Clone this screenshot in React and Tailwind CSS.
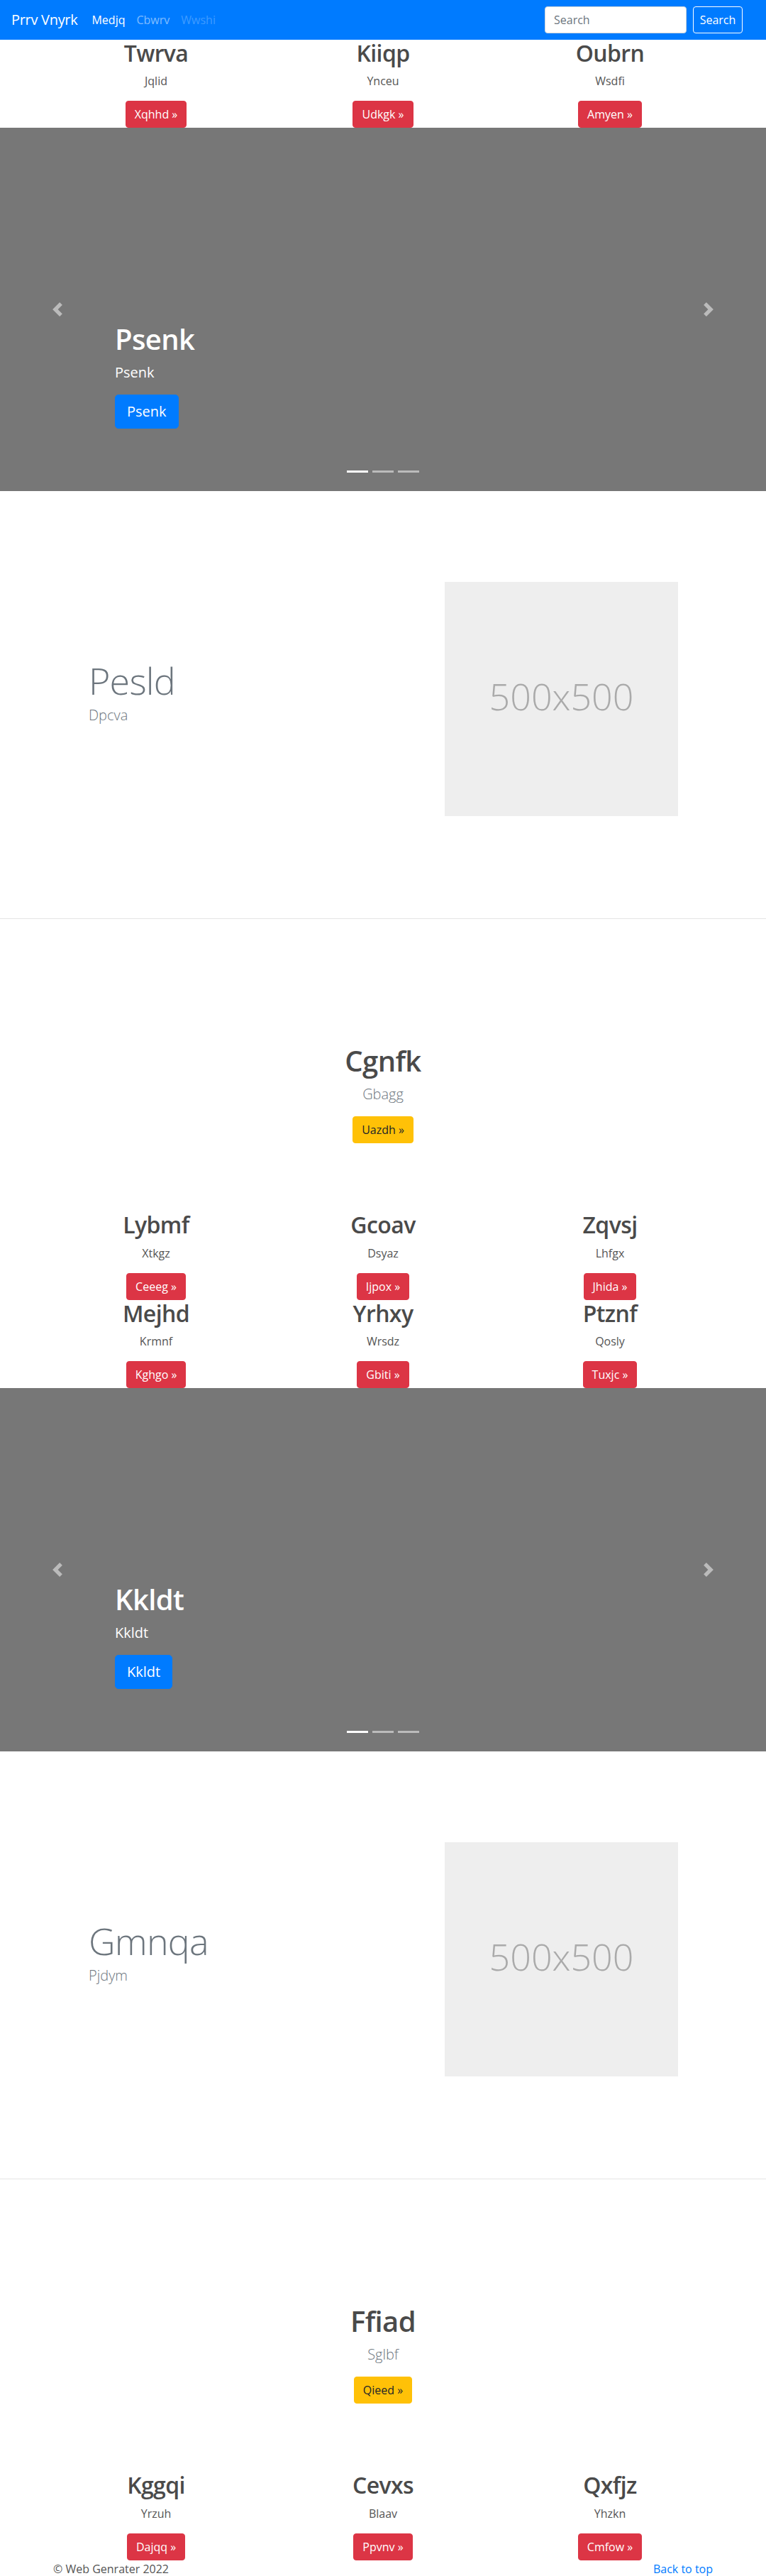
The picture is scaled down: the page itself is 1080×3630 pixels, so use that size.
import React from "react";

const raquo = "\u00bb";

function Column({ title, sub, btn }) {
    return (
        <div className="flex flex-col items-center text-center">
            <h2 className="text-[32px] leading-[1.2] font-semibold tracking-[-0.6px] text-[#4a4a4a] mb-2">{title}</h2>
            <p className="text-base leading-6 text-[#555] mb-4">{sub}</p>
            <a className="inline-block bg-[#dc3545] border border-[#dc3545] text-white text-base leading-6 px-3 py-1.5 rounded">
                {btn} {raquo}
            </a>
        </div>
    );
}

function Row({ items }) {
    return (
        <div className="mx-auto w-[960px] grid grid-cols-3">
            {items.map((it) => (
                <Column key={it[0]} title={it[0]} sub={it[1]} btn={it[2]} />
            ))}
        </div>
    );
}

function Chevron({ left }) {
    return (
        <svg width="20" height="20" viewBox="0 0 8 8" fill="#fff">
            {left ? (
                <path d="M5.25 0l-4 4 4 4 1.5-1.5L4.25 4l2.5-2.5L5.25 0z" />
            ) : (
                <path d="M2.75 0l-1.5 1.5L3.75 4l-2.5 2.5L2.75 8l4-4-4-4z" />
            )}
        </svg>
    );
}

function Carousel({ title }) {
    return (
        <div className="relative h-[512px] bg-[#777] mb-16">
            <div className="absolute left-0 top-0 bottom-0 w-[15%] flex items-center justify-center opacity-50">
                <Chevron left />
            </div>
            <div className="absolute right-0 top-0 bottom-0 w-[15%] flex items-center justify-center opacity-50">
                <Chevron />
            </div>
            {/* caption */}
            <div className="absolute left-[15%] right-[15%] bottom-[52px] py-5 text-white text-left">
                <h1 className="text-[40px] leading-[1.2] font-semibold tracking-[-0.6px] mb-2">{title}</h1>
                <p className="text-xl leading-[1.5] mb-4">{title}</p>
                <div className="flex mb-4">
                    <a className="bg-[#007bff] border border-[#007bff] text-white text-xl leading-[1.5] px-4 py-2 rounded-[5px]">
                        {title}
                    </a>
                </div>
            </div>
            <div className="absolute left-0 right-0 bottom-[26px] flex justify-center">
                <span className="w-[30px] h-[3px] mx-[3px] bg-white" />
                <span className="w-[30px] h-[3px] mx-[3px] bg-white/50" />
                <span className="w-[30px] h-[3px] mx-[3px] bg-white/50" />
            </div>
        </div>
    );
}

function Featurette({ title, sub }) {
    return (
        <div className="mx-auto w-[960px] flex items-center py-16">
            <div className="flex-1 pl-[65px] pb-[14px]">
                <h2 className="text-[52px] leading-none font-light tracking-[-0.05rem] text-[#6c757d] mb-2">{title}</h2>
                <p className="text-xl leading-[1.5] font-light text-[#6c757d]">{sub}</p>
            </div>
            <div className="w-[329px] h-[330px] bg-[#eee] flex items-center justify-center pb-2 mr-[64px]">
                <span className="text-[52px] leading-none font-light text-[#aaa]">500x500</span>
            </div>
        </div>
    );
}

function Hero({ title, sub, btn }) {
    return (
        <div className="py-24 flex flex-col items-center text-center">
            <h1 className="text-[40px] leading-[1.2] font-semibold tracking-[-0.6px] text-[#4a4a4a] mb-2">{title}</h1>
            <p className="text-xl leading-[1.5] font-light text-[#6c757d] mb-4">{sub}</p>
            <a className="bg-[#ffc107] border border-[#ffc107] text-[#212529] text-base leading-6 px-3 py-1.5 rounded">
                {btn} {raquo}
            </a>
        </div>
    );
}

function Divider() {
    return <hr className="my-20 border-0 h-px bg-black/10" />;
}

export default function App() {
    return (
        <div className="w-[1080px] bg-white text-[#212529] font-['Open_Sans','Noto_Sans',sans-serif]">
            <nav className="h-14 bg-[#007bff] flex items-center pl-4 pr-[33px]">
                <span className="text-white text-xl leading-[1.5] mr-[12px] tracking-[-0.3px]">Prrv Vnyrk</span>
                <a className="px-2 text-white">Medjq</a>
                <a className="px-2 text-white/50">Cbwrv</a>
                <a className="px-2 text-white/25">Wwshi</a>
                <div className="ml-auto flex items-center">
                    <input
                        type="text"
                        placeholder="Search"
                        className="w-[200px] h-[38px] rounded bg-white px-3 border border-[#ced4da] text-base text-[#495057] mr-[9px] placeholder:text-[#6c757d] outline-none"
                    />
                    <button className="w-[70px] h-[38px] border border-white rounded text-white text-base">Search</button>
                </div>
            </nav>

            <Row items={[["Twrva", "Jqlid", "Xqhhd"], ["Kiiqp", "Ynceu", "Udkgk"], ["Oubrn", "Wsdfi", "Amyen"]]} />

            <Carousel title="Psenk" />
            <Featurette title="Pesld" sub="Dpcva" />
            <Divider />
            <Hero title="Cgnfk" sub="Gbagg" btn="Uazdh" />

            <Row items={[["Lybmf", "Xtkgz", "Ceeeg"], ["Gcoav", "Dsyaz", "Ijpox"], ["Zqvsj", "Lhfgx", "Jhida"]]} />
            <Row items={[["Mejhd", "Krmnf", "Kghgo"], ["Yrhxy", "Wrsdz", "Gbiti"], ["Ptznf", "Qosly", "Tuxjc"]]} />

            <Carousel title="Kkldt" />
            <Featurette title="Gmnqa" sub="Pjdym" />
            <Divider />
            <Hero title="Ffiad" sub="Sglbf" btn="Qieed" />

            <Row items={[["Kggqi", "Yrzuh", "Dajqq"], ["Cevxs", "Blaav", "Ppvnv"], ["Qxfjz", "Yhzkn", "Cmfow"]]} />

            <footer className="mx-auto w-[960px] px-[15px] flex justify-between text-base leading-6">
                <p className="text-[#555]">© Web Genrater 2022</p>
                <a className="text-[#007bff]">Back to top</a>
            </footer>
        </div>
    );
}
